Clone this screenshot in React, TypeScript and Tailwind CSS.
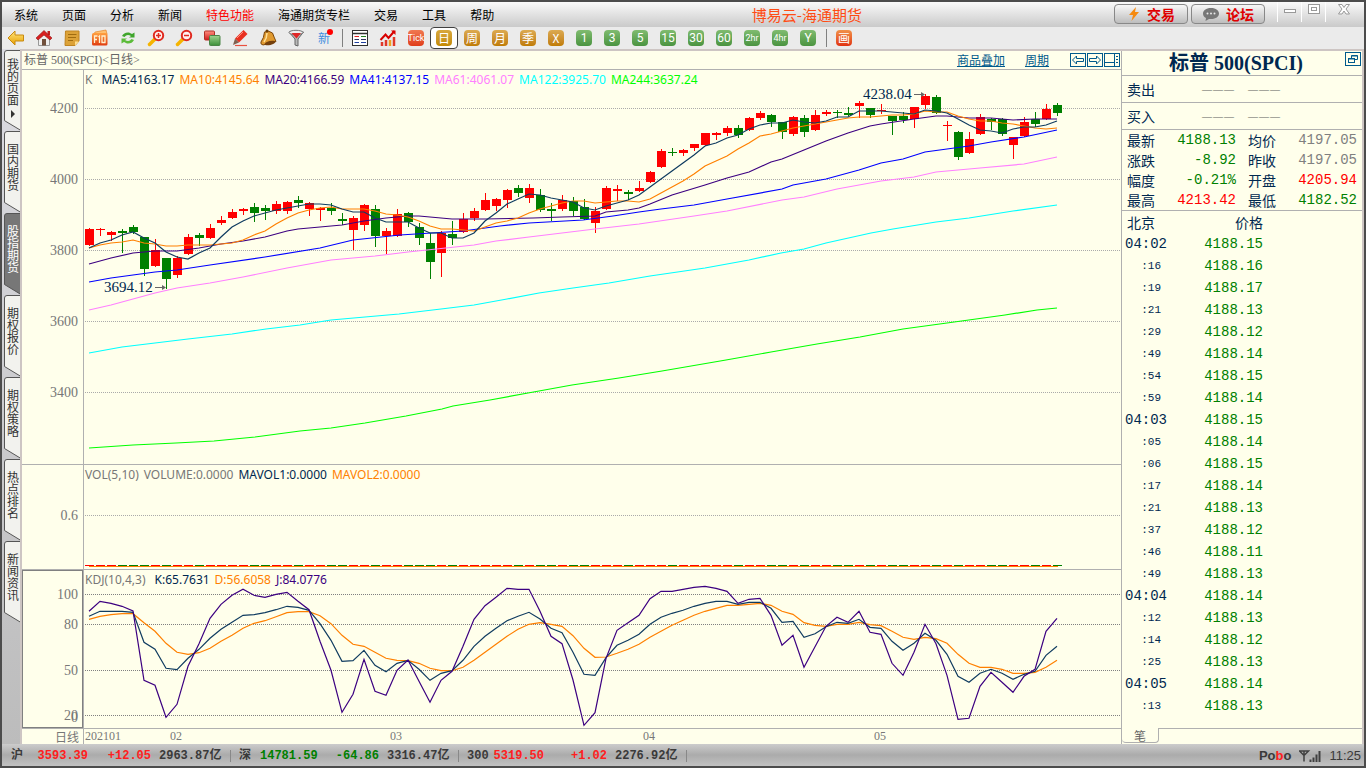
import React from "react";

type Candle = [string, number, number, number, number];

const X0 = 89;
const STEP = 11;

/* direction, high, body top, body bottom, low (chart y positions) */
const candles: Candle[] = [
  ["r", 228, 229, 245, 245], ["r", 228, 229, 230, 235], ["r", 231, 232, 235, 240], ["g", 229, 231, 233, 252],
  ["g", 225, 227, 232, 233], ["g", 237, 237, 269, 275], ["r", 239, 250, 266, 266], ["g", 258, 258, 279, 288],
  ["r", 256, 258, 275, 277], ["r", 234, 237, 254, 254], ["g", 233, 235, 238, 245], ["r", 224, 228, 238, 238],
  ["r", 216, 220, 223, 224], ["r", 209, 212, 218, 218], ["r", 208, 209, 211, 214], ["g", 203, 207, 213, 221],
  ["g", 205, 208, 211, 219], ["r", 201, 204, 211, 213], ["r", 201, 202, 211, 213], ["g", 196, 200, 203, 207],
  ["r", 202, 203, 209, 215], ["r", 207, 208, 210, 220], ["g", 203, 208, 211, 214], ["g", 213, 219, 221, 224],
  ["r", 216, 218, 230, 249], ["r", 204, 205, 225, 230], ["g", 205, 209, 236, 246], ["r", 228, 231, 236, 253],
  ["r", 209, 214, 236, 236], ["g", 212, 213, 222, 226], ["g", 223, 227, 238, 244], ["g", 233, 243, 262, 278],
  ["r", 231, 233, 253, 276], ["g", 221, 234, 238, 244], ["r", 213, 219, 232, 232], ["r", 208, 211, 218, 220],
  ["r", 193, 200, 210, 210], ["r", 198, 199, 206, 210], ["r", 189, 190, 200, 207], ["g", 185, 188, 193, 196],
  ["r", 184, 188, 198, 202], ["g", 189, 195, 210, 211], ["g", 203, 209, 211, 220], ["r", 195, 200, 209, 210],
  ["g", 197, 201, 211, 215], ["g", 199, 207, 219, 219], ["r", 207, 211, 223, 232], ["r", 186, 188, 209, 209],
  ["r", 185, 189, 191, 200], ["g", 190, 192, 194, 199], ["r", 181, 188, 191, 191], ["r", 171, 172, 182, 182],
  ["r", 149, 151, 167, 167], ["g", 148, 152, 153, 155], ["r", 149, 150, 153, 155], ["r", 144, 144, 148, 150],
  ["r", 133, 133, 145, 145], ["r", 132, 133, 135, 139], ["r", 126, 128, 133, 135], ["g", 125, 128, 135, 137],
  ["r", 117, 118, 130, 130], ["r", 111, 113, 118, 119], ["g", 114, 115, 122, 126], ["g", 122, 122, 132, 138],
  ["r", 116, 117, 134, 135], ["g", 115, 118, 132, 136], ["r", 110, 115, 130, 130], ["r", 110, 112, 114, 115],
  ["g", 110, 112, 113, 117], ["g", 107, 113, 115, 115], ["r", 101, 103, 106, 117], ["g", 108, 108, 115, 117],
  ["r", 104, 110, 111, 113], ["g", 116, 116, 121, 134], ["g", 112, 116, 120, 122], ["r", 107, 107, 119, 127],
  ["r", 94, 96, 105, 108], ["g", 95, 97, 113, 113], ["r", 121, 125, 126, 140], ["g", 131, 132, 157, 159],
  ["r", 132, 139, 153, 153], ["r", 114, 117, 134, 134], ["g", 118, 119, 122, 129], ["g", 118, 119, 134, 135],
  ["r", 137, 137, 145, 158], ["r", 117, 122, 136, 136], ["g", 112, 119, 124, 126], ["r", 104, 109, 119, 119],
  ["g", 103, 105, 113, 115],
];

const ma5 = [248, 243, 240, 235, 232, 238, 243, 252, 257, 259, 253, 248, 237, 227, 221, 216, 213, 210, 208, 206, 204, 204, 205, 209, 212, 212, 218, 222, 222, 222, 228, 233, 233, 238, 238, 233, 221, 213, 204, 199, 194, 195, 198, 200, 202, 208, 210, 206, 203, 200, 195, 187, 179, 171, 163, 155, 146, 143, 138, 135, 129, 125, 123, 123, 120, 122, 123, 121, 117, 117, 111, 111, 111, 112, 113, 114, 110, 111, 113, 119, 125, 130, 131, 133, 129, 127, 127, 125, 121];
const ma10 = [248, 245, 243, 242, 240, 243, 244, 246, 246, 245, 245, 245, 244, 243, 240, 235, 231, 224, 218, 213, 210, 208, 207, 209, 209, 209, 211, 214, 215, 217, 221, 226, 229, 229, 230, 231, 227, 223, 221, 218, 213, 209, 206, 203, 201, 201, 203, 202, 201, 201, 202, 199, 193, 187, 181, 174, 166, 161, 156, 149, 143, 136, 134, 131, 128, 126, 124, 122, 120, 118, 117, 117, 116, 115, 115, 114, 111, 112, 112, 116, 119, 121, 121, 123, 124, 126, 128, 129, 128];
const ma20 = "89,264 111,258 133,253 155,251 177,251 199,248 221,244 243,241 265,237 287,231 298,229 320,227 342,225 364,221 386,218 408,216 419,216 452,219 485,219 533,218 562,217 595,216 606,212 628,210 639,208 650,204 672,195 705,185 727,178 749,172 771,162 782,159 804,150 826,141 848,133 870,126 881,124 914,119 936,116 947,116 969,118 991,118 1013,120 1035,119 1057,119";
const ma41 = "89,282 111,278 133,275 155,272 177,270 210,265 265,257 320,248 353,240 400,235 463,231 500,226 529,223 583,220 613,216 639,212 661,209 694,205 727,199 782,189 793,185 826,179 859,170 881,163 903,159 925,152 947,149 969,146 991,142 1024,137 1057,130";
const ma61 = "89,310 111,305 133,299 155,293 177,288 210,283 243,277 287,268 331,260 353,258 375,256 408,252 474,245 496,241 529,237 595,229 639,224 694,216 727,211 782,200 804,197 837,189 881,181 914,177 936,172 980,168 1024,164 1057,157";
const ma122 = "89,353 122,347 155,343 188,339 232,334 266,329 300,325 331,320 399,314 441,309 474,305 507,299 539,293 573,288 609,283 650,276 705,268 749,260 781,253 804,249 826,243 871,233 893,229 936,222 969,218 1013,211 1057,205";
const ma244 = "89,448 133,445 176,443 214,441 255,437 300,431 331,428 365,423 406,416 442,409 453,406 490,400 528,393 572,385 619,378 662,371 726,360 771,352 817,344 860,337 903,329 947,323 1005,315 1037,310 1057,308";

/* KDJ samples, in thirds of a pixel below y = 565 */
const kdjJ = [139, 109, 115, 124, 138, 346, 361, 457, 418, 304, 236, 160, 118, 91, 73, 91, 97, 88, 82, 109, 134, 229, 316, 442, 388, 283, 379, 391, 316, 285, 349, 412, 346, 319, 244, 163, 122, 97, 70, 73, 73, 139, 214, 236, 345, 481, 443, 280, 196, 173, 151, 101, 79, 79, 73, 67, 64, 70, 79, 115, 103, 100, 151, 241, 211, 307, 245, 184, 157, 172, 139, 202, 208, 295, 331, 262, 178, 236, 331, 463, 460, 364, 322, 352, 382, 334, 313, 199, 160];
const kdjK = [154, 139, 139, 139, 142, 232, 253, 310, 314, 280, 253, 220, 193, 172, 151, 149, 143, 134, 124, 127, 136, 176, 226, 289, 287, 256, 301, 320, 295, 286, 313, 346, 325, 317, 286, 244, 214, 190, 167, 154, 142, 162, 190, 203, 262, 328, 331, 278, 241, 226, 208, 178, 157, 145, 136, 124, 115, 109, 109, 118, 112, 112, 130, 172, 169, 217, 206, 185, 172, 175, 163, 187, 190, 229, 256, 235, 205, 226, 268, 334, 352, 325, 313, 325, 343, 328, 319, 271, 244];
const kdjD = [163, 154, 149, 146, 146, 173, 199, 235, 262, 268, 263, 250, 229, 211, 190, 175, 167, 155, 143, 140, 140, 152, 176, 211, 238, 244, 262, 280, 286, 287, 295, 310, 317, 317, 307, 286, 262, 238, 214, 193, 178, 173, 178, 184, 212, 250, 277, 276, 265, 253, 238, 217, 199, 181, 166, 151, 139, 130, 121, 121, 118, 115, 121, 139, 148, 173, 181, 184, 178, 178, 172, 179, 182, 199, 217, 223, 217, 221, 235, 268, 295, 307, 307, 313, 325, 325, 322, 307, 286];

const series = (ys: number[]) => ys.map((y, i) => `${X0 + STEP * i},${y}`).join(" ");
const kdj = (ys: number[]) => ys.map((y, i) => `${X0 + STEP * i},${(565 + y / 3).toFixed(1)}`).join(" ");
const tone = (c: string) => (c === "r" ? "#ff0000" : "#008000");

function Line({ points, color }: { points: string; color: string }) {
  return <polyline points={points} fill="none" stroke={color} strokeWidth="1.2" />;
}

function Grid({ ys, color }: { ys: number[]; color: string }) {
  return (
    <g>
      {ys.map((y) => (
        <line key={y} x1="85" x2="3000" y1={y + 0.5} y2={y + 0.5} stroke={color} strokeDasharray="1 1" shapeRendering="crispEdges" />
      ))}
    </g>
  );
}

function AxisText({ y, children }: { y: number; children: string }) {
  return (
    <text x="78" y={y + 5} textAnchor="end" fill="#777777" className="font-['Liberation_Serif',serif] text-[14px]">
      {children}
    </text>
  );
}

function Divider() {
  return <line x1="83.5" x2="83.5" y1="0" y2="800" stroke="#b0b0b0" shapeRendering="crispEdges" />;
}

function PriceChart() {
  return (
    <svg className="block h-full w-full" role="img" aria-label="K线图">
      <g transform="translate(-22 -70)">
        <Divider />
        <Grid ys={[108, 179, 250, 321, 392]} color="#aaaaaa" />
        <AxisText y={108}>4200</AxisText>
        <AxisText y={179}>4000</AxisText>
        <AxisText y={250}>3800</AxisText>
        <AxisText y={321}>3600</AxisText>
        <AxisText y={392}>3400</AxisText>
        <g shapeRendering="crispEdges">
          {candles.map(([c, h, t, b, l], i) => (
            <g key={i} fill={tone(c)}>
              <rect x={X0 + STEP * i} y={h} width="1" height={l - h + 1} />
              <rect x={X0 + STEP * i - 4} y={t} width="9" height={b - t} />
            </g>
          ))}
        </g>
        <Line points={ma244} color="#00ff00" />
        <Line points={ma122} color="#00ffff" />
        <Line points={ma61} color="#ff80ff" />
        <Line points={ma41} color="#0000ff" />
        <Line points={ma20} color="#3c0080" />
        <Line points={series(ma10)} color="#ff8000" />
        <Line points={series(ma5)} color="#103c60" />
        <g fill="#002850" className="font-['Liberation_Serif',serif] text-[15px]">
          <text x="104" y="292">3694.12</text>
          <text x="863" y="99">4238.04</text>
        </g>
        <g stroke="#666666" fill="#666666">
          <path d="M155 287.500H165" />
          <path d="M162 285L166 287.500L162 290Z" stroke="none" />
          <path d="M914 94.500H924" />
          <path d="M921 92L925 94.500L921 97Z" stroke="none" />
        </g>
      </g>
    </svg>
  );
}

function VolumeChart() {
  return (
    <svg className="block h-full w-full" role="img" aria-label="成交量">
      <g transform="translate(-22 -465)">
        <Divider />
        <Grid ys={[515]} color="#aaaaaa" />
        <AxisText y={515}>0.6</AxisText>
        <g shapeRendering="crispEdges">
          {candles.map(([c], i) => (
            <rect key={i} x={X0 + STEP * i - 4} y="565" width="9" height="1" fill={tone(c)} />
          ))}
          <rect x="89" y="566" width="969" height="1" fill="#ff8000" />
        </g>
      </g>
    </svg>
  );
}

function KdjChart() {
  return (
    <svg className="block h-full w-full" role="img" aria-label="KDJ">
      <g transform="translate(-22 -570)">
        <Divider />
        <rect x="22.500" y="570.500" width="60" height="157" fill="none" stroke="#808080" shapeRendering="crispEdges" />
        <Grid ys={[594, 624, 670, 715]} color="#808080" />
        <AxisText y={594}>100</AxisText>
        <AxisText y={624}>80</AxisText>
        <AxisText y={670}>50</AxisText>
        <AxisText y={715}>20</AxisText>
        <AxisText y={717}>0</AxisText>
        <Line points={kdj(kdjD)} color="#ff8000" />
        <Line points={kdj(kdjK)} color="#103c60" />
        <Line points={kdj(kdjJ)} color="#3c0080" />
      </g>
    </svg>
  );
}

const menus = ["系统", "页面", "分析", "新闻", "特色功能", "海通期货专栏", "交易", "工具", "帮助"];

const icon = "block size-[18px]";

function Defs() {
  return (
    <svg className="absolute size-0" aria-hidden="true">
      <defs>
        <linearGradient id="gold" x1="0" y1="0" x2="0" y2="1"><stop offset="0" stopColor="#ffe680" /><stop offset="1" stopColor="#e8a000" /></linearGradient>
        <linearGradient id="orange" x1="0" y1="0" x2="0" y2="1"><stop offset="0" stopColor="#ffa040" /><stop offset="1" stopColor="#e03c10" /></linearGradient>
        <linearGradient id="greenery" x1="0" y1="0" x2="0" y2="1"><stop offset="0" stopColor="#9fd48f" /><stop offset="1" stopColor="#3d8f3a" /></linearGradient>
        <linearGradient id="redness" x1="0" y1="0" x2="0" y2="1"><stop offset="0" stopColor="#ff9080" /><stop offset="1" stopColor="#d01818" /></linearGradient>
      </defs>
    </svg>
  );
}

function Magnifier({ plus }: { plus: boolean }) {
  return (
    <svg viewBox="0 0 18 18" className={icon}>
      <path d="M8 10L2.500 15.500" stroke="#f5b400" strokeWidth="3.500" strokeLinecap="round" />
      <circle cx="11.500" cy="6.500" r="4.700" fill="#fff2f0" stroke="#e02a20" strokeWidth="2" />
      <path d="M9 6.500H14" stroke="#e02a20" strokeWidth="1.500" />
      {plus && <path d="M11.500 4V9" stroke="#e02a20" strokeWidth="1.500" />}
    </svg>
  );
}

const tools: { label: string; art: React.ReactNode }[] = [
  { label: "后退", art: <svg viewBox="0 0 18 18" className={icon}><path d="M1 9L8 2V6H16.500V12H8V16Z" fill="url(#gold)" stroke="#c88a10" /></svg> },
  { label: "主页", art: <svg viewBox="0 0 18 18" className={icon}><path d="M3.500 9V16.500H14.500V9L9 4Z" fill="#eeeeee" stroke="#999999" /><rect x="7" y="10" width="4" height="6.500" fill="#70503c" /><path d="M12.500 2H15V6H12.500Z" fill="#c02020" /><path d="M1 9L9 1.500L17 9L15 11L9 6L3 11Z" fill="#d82020" stroke="#901818" strokeWidth=".6" /></svg> },
  { label: "笔记", art: <svg viewBox="0 0 18 18" className={icon}><path d="M2.500 2H16V12L12 16.500H2Z" fill="#dca238" stroke="#c08420" /><path d="M5 5.500H13.500M5 8.500H13M5 11.500H10" stroke="#a06c10" /><path d="M12 16.500V12.500H16Z" fill="#ffe090" /></svg> },
  { label: "F10", art: <svg viewBox="0 0 18 18" className={icon}><path d="M4 3L15 1L16 5H3Z" fill="#ffc070" stroke="#e07818" strokeWidth=".6" /><rect x="1" y="4" width="15.500" height="12.500" rx="1.500" fill="url(#orange)" /><path d="M3.500 14V7H6.500M3.500 10.500H6M8.500 14V7L7.500 8M11 7H14V13.500H11Z" fill="none" stroke="#fff0d0" strokeWidth="1.300" /></svg> },
  { label: "刷新", art: <svg viewBox="0 0 18 18" className={icon}><path d="M3 7Q5 3 10 3.500L13 5L15.500 3.500V8.500H10L12 7Q8 4.500 5.500 8Z" fill="#3fa52c" /><path d="M15 11Q13 15 8 14.500L5 13L2.500 14.500V9.500H8L6 11Q10 13.500 12.500 10Z" fill="#5cbc3a" /></svg> },
  { label: "放大", art: <Magnifier plus /> },
  { label: "缩小", art: <Magnifier plus={false} /> },
  { label: "叠加", art: <svg viewBox="0 0 18 18" className={icon}><rect x="1.500" y="2" width="10" height="9" rx="1" fill="url(#redness)" stroke="#b03028" /><rect x="6.500" y="6.500" width="10.500" height="10" rx="1" fill="url(#greenery)" stroke="#4b8547" /></svg> },
  { label: "画线", art: <svg viewBox="0 0 18 18" className={icon}><path d="M12.500 1L16.500 5L8 13.500L4 9.500Z" fill="#e83020" /><path d="M12 3L6 9" stroke="#ff9080" /><path d="M4 9.500L8 13.500L2 16Z" fill="#806050" /><path d="M4 16.500H16" stroke="#e85040" strokeWidth="1.200" /></svg> },
  { label: "预警", art: <svg viewBox="0 0 18 18" className={icon}><path d="M5.500 3Q10 1 13.500 4Q15 8 17 12.500L4 16Q1 15 2 13Q5 9 5.500 3Z" fill="#e09a30" stroke="#7c4608" /><path d="M8 4Q8 9 5 13" stroke="#ffe098" strokeWidth="1.500" fill="none" /><ellipse cx="11" cy="14" rx="5.500" ry="2" fill="#75400c" transform="rotate(-14 11 14)" /><circle cx="8" cy="2" r="1.500" fill="#6b3d08" /></svg> },
  { label: "筛选", art: <svg viewBox="0 0 18 18" className={icon}><path d="M2 3L8 10V16L11 17V10L16.500 3Z" fill="#b8b8b8" stroke="#666666" /><ellipse cx="9" cy="3.500" rx="7" ry="2.200" fill="#eeeeee" stroke="#777777" /><path d="M4.500 4H14L9.500 9.500Z" fill="#e02828" /></svg> },
  { label: "新", art: <span className="relative block size-[18px] text-[12px] leading-[18px] text-[#3f8ee0]">新<i className="absolute right-0 top-0 size-1.5 rounded-full bg-[#ff0000]" /></span> },
];

function ReportIcon() {
  return (
    <svg viewBox="0 0 18 18" className={icon}>
      <rect x="1.500" y="1.500" width="15" height="15" fill="#ffffff" stroke="#303030" />
      <path d="M1 4.500H17" stroke="#303030" strokeWidth="1.500" />
      <path d="M3.500 7.500H8" stroke="#e02020" /><path d="M10 7.500H15" stroke="#208020" />
      <path d="M3.500 10.500H8M10 10.500H15" stroke="#303060" /><path d="M3.500 13.500H8M10 13.500H15" stroke="#2040a0" />
    </svg>
  );
}

function TrendIcon() {
  return (
    <svg viewBox="0 0 18 18" className={icon}>
      <path d="M3 13V17M7 11V17" stroke="#e03828" strokeWidth="2.500" /><path d="M11 11V17" stroke="#f0a020" strokeWidth="2.500" /><path d="M15 8V17" stroke="#e03828" strokeWidth="2.500" />
      <path d="M1.500 11L6.500 5.500L9.500 9L15.500 2" fill="none" stroke="#d80000" strokeWidth="2" /><path d="M12 1.500H16.500V6Z" fill="#d80000" />
    </svg>
  );
}

const goldKeys = ["周", "月", "季", "X"];
const greenKeys = ["1", "3", "5", "15", "30", "60", "2hr", "4hr", "Y"];
const key = "block size-4 rounded-sm text-center leading-4 text-white";
const cell = "flex h-[22px] w-7 shrink-0 items-center justify-center";

function Toolbar() {
  return (
    <div className="flex h-[22px] items-center bg-[#ebebeb]">
      {tools.map((t) => (
        <button key={t.label} aria-label={t.label} className={cell}>{t.art}</button>
      ))}
      <div className="flex w-2 shrink-0 justify-center"><i className="h-[18px] w-px bg-[#808080]" /></div>
      <button aria-label="报价" className={cell}><ReportIcon /></button>
      <button aria-label="走势" className={cell}><TrendIcon /></button>
      <button className={cell}><span className="flex size-4 justify-center rounded-sm bg-linear-to-b from-[#f07850] to-[#e03c18] font-['Liberation_Sans_Narrow',Roboto,sans-serif] text-[9px] leading-4 text-white">Tick</span></button>
      <button aria-pressed="true" className="flex h-[22px] w-7 shrink-0 items-center justify-center rounded-sm border border-[#404040] bg-white">
        <span className={key + " bg-linear-to-b from-[#d8a83c] to-[#c48a00] text-[12px]"}>日</span>
      </button>
      {goldKeys.map((k) => (
        <button key={k} className={cell}><span className={key + " bg-linear-to-b from-[#dcaa50] to-[#c07c00] text-[12px]"}>{k}</span></button>
      ))}
      {greenKeys.map((k) => (
        <button key={k} className={cell}>
          <span className={key + " bg-linear-to-b from-[#80bc70] to-[#4a9440] font-[Roboto,sans-serif] " + (k.length > 2 ? "text-[9px]" : "text-[12px]")}>{k}</span>
        </button>
      ))}
      <div className="flex w-2 shrink-0 justify-center"><i className="h-[18px] w-px bg-[#808080]" /></div>
      <button className={cell}><span className={key + " bg-linear-to-b from-[#f09048] to-[#e03010] text-[12px]"}>画</span></button>
    </div>
  );
}

const capsule = "flex h-5 w-[74px] items-center justify-center gap-1.5 rounded-[4px] border border-[#888888] bg-linear-to-b from-[#f8f8f8] to-[#bdbdbd] text-[14px] leading-none font-bold text-[#e00000]";

function TitleBar() {
  return (
    <header className="relative flex h-[25px] items-start bg-linear-to-b from-[#fafafa] to-[#cacaca] pr-[3px]">
      <nav className="flex gap-6 pl-3 text-[12px] leading-[26px] text-black">
        {menus.map((m) => (
          <button key={m} className={m === "特色功能" ? "text-[#ff0000]" : "text-black"}>{m}</button>
        ))}
      </nav>
      <h1 className="ml-auto text-[15px] leading-[26px] text-[#ff4c14]">博易云-海通期货</h1>
      <div className="ml-[252px] flex shrink-0 gap-[3px] pt-0.5">
        <button className={capsule}>
          <svg viewBox="0 0 14 16" className="h-4 w-3.5"><path d="M9 1L2 9H6L4.500 15L12 6H8Z" fill="#f58a10" /></svg>
          交易
        </button>
        <button className={capsule}>
          <svg viewBox="0 0 18 14" className="h-3.5 w-[18px]"><path d="M9 1C14 1 17 3.500 17 6.500S14 12 9 12L7 12L3.500 14L4 11C2 10 1 8.500 1 6.500C1 3.500 4 1 9 1Z" fill="#777777" /><g fill="#e8e8e8"><circle cx="5.500" cy="6.500" r="1" /><circle cx="9" cy="6.500" r="1" /><circle cx="12.500" cy="6.500" r="1" /></g></svg>
          论坛
        </button>
      </div>
      <div className="ml-3 flex h-5 shrink-0 text-[#999999]">
        <button aria-label="最小化" className="flex w-6 items-start justify-center border-l border-white pt-0.5"><svg viewBox="0 0 14 12" className="h-3 w-3.5"><rect x="1.500" y="5.500" width="11" height="3" fill="#ffffff" stroke="#999999" /></svg></button>
        <button aria-label="最大化" className="flex w-6 items-start justify-center border-l border-white pt-0.5"><svg viewBox="0 0 14 12" className="h-3 w-3.5"><rect x="1.500" y=".5" width="11" height="9" fill="#ffffff" stroke="#999999" /><rect x="4.500" y="3.500" width="5" height="3" fill="none" stroke="#999999" /></svg></button>
        <button aria-label="关闭" className="flex w-9 items-start justify-center border-l border-white pt-0.5"><svg viewBox="0 0 14 12" className="h-3 w-3.5"><path d="M1.500 .5H5L7 3.500L9 .5H12.500L9 5L12.500 10H9L7 7L5 10H1.500L5 5Z" fill="#ffffff" stroke="#999999" /></svg></button>
      </div>
    </header>
  );
}

const tabs = ["我的页面", "国内期货", "股指期货", "期权报价", "期权策略", "热点排名", "新闻资讯"];

function SideTabs() {
  return (
    <nav className="flex w-[18px] shrink-0 flex-col bg-linear-to-b from-[#dcdce2] to-[#bcbcbc] pl-0.5 pt-px">
      {tabs.map((t, i) => {
        const on = i === 2;
        return (
          <button key={t} aria-current={on ? "page" : undefined} className={"relative flex w-4 flex-col items-center pl-px text-[12px] leading-[14px] " + (i === 0 ? "h-[81px] pt-2 " : "h-[82px] pt-3 ") + (on ? "text-white" : "text-[#333333]")}>
            <svg viewBox="0 0 16 82" preserveAspectRatio="none" className="absolute inset-0 h-full w-full">
              <path d="M17 .5H3Q.5 .5 .5 3V71.500L17 81.500Z" fill={on ? "#777777" : "#f2f2ee"} stroke="#555555" />
            </svg>
            <span className="relative [writing-mode:vertical-rl]">{t}</span>
            {i === 0 && <svg viewBox="0 0 6 8" className="relative mt-1 h-2 w-1.5"><path d="M1 0L5 4L1 8Z" fill="#333333" /></svg>}
          </button>
        );
      })}
    </nav>
  );
}

const label = "absolute left-[63px] top-0 flex gap-[5px] whitespace-pre font-['Noto_Sans',sans-serif] text-[12px] leading-5";

function ChartArea() {
  return (
    <main className="flex min-w-0 flex-1 flex-col">
      <div className="flex h-[19px] items-center border-b border-[#b0b0b0] pl-0.5">
        <h2 className="font-['Liberation_Serif','Noto_Sans_CJK_SC',serif] text-[12px] leading-[18px] text-[#666666]">标普 500(SPCI)&lt;日线&gt;</h2>
        <a href="#overlay" className="ml-auto text-[12px] leading-[18px] text-[#005a8c] underline">商品叠加</a>
        <a href="#period" className="ml-5 mr-[21px] text-[12px] leading-[18px] text-[#005a8c] underline">周期</a>
        <div className="flex gap-px pr-px">
          <button aria-label="向左"><svg viewBox="0 0 16 14" className="h-3.5 w-4" fill="none" stroke="#005a8c"><rect x=".5" y=".5" width="15" height="13" /><path d="M2.500 7L6.500 3V5.500H13.500V8.500H6.500V11Z" /></svg></button>
          <button aria-label="向右"><svg viewBox="0 0 16 14" className="h-3.5 w-4" fill="none" stroke="#005a8c"><rect x=".5" y=".5" width="15" height="13" /><path d="M13.500 7L9.500 3V5.500H2.500V8.500H9.500V11Z" /></svg></button>
          <button aria-label="布局"><svg viewBox="0 0 16 14" className="h-3.5 w-4" fill="none" stroke="#005a8c"><rect x=".5" y=".5" width="15" height="13" /><path d="M10.500 0V14M0 9.500H10" /><path d="M12 3.500H14M12 6.500H14M12 9.500H14" /></svg></button>
        </div>
      </div>
      <section className="relative min-h-[395px] flex-1 border-b border-[#b0b0b0]">
        <PriceChart />
        <p className={label}>
          <span className="mr-1 text-[#777777]">K</span>
          <span className="text-[#002850]">MA5:4163.17</span>
          <span className="text-[#ff8000]">MA10:4145.64</span>
          <span className="text-[#3c0080]">MA20:4166.59</span>
          <span className="text-[#0000ff]">MA41:4137.15</span>
          <span className="text-[#ff80ff]">MA61:4061.07</span>
          <span className="text-[#00ffff]">MA122:3925.70</span>
          <span className="text-[#00ff00]">MA244:3637.24</span>
        </p>
      </section>
      <section className="relative h-[105px] border-b border-[#b0b0b0]">
        <VolumeChart />
        <p className={label}>
          <span className="text-[#777777]">VOL(5,10)</span>
          <span className="text-[#777777]">VOLUME:0.0000</span>
          <span className="text-[#002850]">MAVOL1:0.0000</span>
          <span className="text-[#ff8000]">MAVOL2:0.0000</span>
        </p>
      </section>
      <section className="relative h-[159px] border-b border-[#b0b0b0]">
        <KdjChart />
        <p className={label}>
          <span className="mr-1 text-[#777777]">KDJ(10,4,3)</span>
          <span className="text-[#002850]">K:65.7631</span>
          <span className="text-[#ff8000]">D:56.6058</span>
          <span className="text-[#3c0080]">J:84.0776</span>
        </p>
      </section>
      <div className="flex h-[15px] text-[12px] leading-[15px] text-[#777777]">
        <span className="w-[61px] pr-1 text-right">日线</span>
        <svg className="h-[15px] flex-1">
          <line x1=".5" x2=".5" y1="0" y2="15" stroke="#b0b0b0" />
          <g fill="#777777" className="font-['Liberation_Serif',serif] text-[12px]">
            <text x="2" y="11">202101</text>
            <text x="87" y="11">02</text>
            <text x="307" y="11">03</text>
            <text x="560" y="11">04</text>
            <text x="791" y="11">05</text>
          </g>
        </svg>
      </div>
    </main>
  );
}

const quotes = [
  ["最新", "4188.13", "text-[#008000]", "均价", "4197.05", "text-[#808080]"],
  ["涨跌", "-8.92", "text-[#008000]", "昨收", "4197.05", "text-[#808080]"],
  ["幅度", "-0.21%", "text-[#008000]", "开盘", "4205.94", "text-[#ff0000]"],
  ["最高", "4213.42", "text-[#ff0000]", "最低", "4182.52", "text-[#008000]"],
];

const ticks = [
  ["04:02", "4188.15"], [":16", "4188.16"], [":19", "4188.17"], [":21", "4188.13"], [":29", "4188.12"], [":49", "4188.14"],
  [":54", "4188.15"], [":59", "4188.14"], ["04:03", "4188.15"], [":05", "4188.14"], [":06", "4188.15"], [":17", "4188.14"],
  [":21", "4188.13"], [":37", "4188.12"], [":46", "4188.11"], [":49", "4188.13"], ["04:04", "4188.14"], [":12", "4188.13"],
  [":14", "4188.12"], [":25", "4188.13"], ["04:05", "4188.14"], [":13", "4188.13"],
];

function Dashes() {
  return (
    <span className="flex gap-px font-['Liberation_Serif',serif] text-[10px] text-[#606060]">
      <span>—</span><span>—</span><span>—</span>
    </span>
  );
}

function QuotePanel() {
  return (
    <aside className="flex w-[241px] shrink-0 flex-col border-l border-[#b0b0b0]">
      <div className="relative flex h-[25px] items-center justify-center border-b border-[#b0b0b0] pr-3">
        <h2 className="font-['Liberation_Serif','Noto_Sans_CJK_SC',serif] text-[20px] leading-6 font-bold text-[#002850]">标普 500(SPCI)</h2>
        <button aria-label="还原窗口" className="absolute right-px top-px">
          <svg viewBox="0 0 16 14" className="h-3.5 w-4" fill="none" stroke="#005a8c"><rect x=".5" y=".5" width="15" height="13" /><path d="M6.500 6V3.500H12.500V7.500H10M6.500 4H12.500" /><rect x="3.500" y="6.500" width="6" height="4" /><path d="M3.500 7H9.500" /></svg>
        </button>
      </div>
      {["卖出", "买入"].map((t) => (
        <div key={t} className="flex h-[27px] items-center border-b border-[#b0b0b0] pl-[5px] text-[14px] text-[#002850]">
          <span className="w-[75px]">{t}</span>
          <span className="flex gap-3.5"><Dashes /><Dashes /></span>
        </div>
      ))}
      <table className="w-full border-b border-[#b0b0b0] text-[14px] leading-5 text-[#002850]">
        <tbody>
          {quotes.map(([a, av, ac, b, bv, bc]) => (
            <tr key={a} className="h-5">
              <th className="w-[34px] p-0 pl-[5px] text-left font-normal">{a}</th>
              <td className={"w-20 p-0 text-right font-['Liberation_Mono',monospace] text-[14px] " + ac}>{av}</td>
              <th className="w-[42px] p-0 pl-3 text-left font-normal">{b}</th>
              <td className={"p-0 pr-[5px] text-right font-['Liberation_Mono',monospace] text-[14px] " + bc}>{bv}</td>
            </tr>
          ))}
        </tbody>
      </table>
      <table className="w-full text-[#002850]">
        <thead>
          <tr className="h-[22px] text-[14px] leading-[22px]">
            <th className="w-[45px] p-0 pl-[5px] text-left font-normal">北京</th>
            <th className="w-24 p-0 text-right font-normal">价格</th>
            <th className="p-0" />
          </tr>
        </thead>
        <tbody className="font-['Liberation_Mono',monospace]">
          {ticks.map(([t, p], i) => (
            <tr key={i} className="h-[22px] leading-[22px]">
              <td className={t.length > 3 ? "p-0 text-right text-[14px]" : "p-0 pr-1.5 text-right text-[11px]"}>{t}</td>
              <td className="p-0 text-right text-[14px] text-[#008000]">{p}</td>
              <td className="p-0" />
            </tr>
          ))}
        </tbody>
      </table>
      <div className="mt-auto flex h-4">
        <button className="h-[15px] w-[37px] rounded-b-sm border-r border-b border-[#b0b0b0] text-[12px] leading-[15px] text-[#666666]">笔</button>
        <i className="flex-1 border-t border-[#b0b0b0]" />
      </div>
    </aside>
  );
}

function Index({ name, value, change, turnover, up }: { name: string; value: string; change: string; turnover: string; up: boolean }) {
  const color = up ? "text-[#ff2020]" : "text-[#008000]";
  return (
    <div className="flex items-center">
      <span className="w-[21px]">{name}</span>
      <span className={"w-14 text-right " + color}>{value}</span>
      <span className={"w-[63px] text-right " + color}>{change}</span>
      <span className="ml-2 w-[63px]">{turnover}</span>
      <i className="ml-2 h-3 w-px bg-[#888888]" />
    </div>
  );
}

function StatusBar() {
  return (
    <footer className="flex h-[22px] items-center gap-2 bg-linear-to-b from-[#cccccc] via-[#ababab] to-[#c2c2c2] pt-0.5 pl-[9px] pr-[3px] font-['Liberation_Mono','Noto_Sans_CJK_SC',monospace] text-[12px] font-bold text-[#3a3a3a]">
      <Index name="沪" value="3593.39" change="+12.05" turnover="2963.87亿" up />
      <Index name="深" value="14781.59" change="-64.86" turnover="3316.47亿" up={false} />
      <Index name="300" value="5319.50" change="+1.02" turnover="2276.92亿" up />
      <span className="ml-auto font-['Liberation_Sans',sans-serif] text-[13px]">Po<span className="text-[#ff2020]">b</span>o</span>
      <svg viewBox="0 0 22 12" className="h-3 w-[22px]" fill="none" stroke="#404040"><path d="M.5 1H9.500L5 5.500ZM5 1V11.500" strokeWidth="1.500" /><path d="M11.500 9.500V12M14.500 7.500V12M17.500 4.500V12M20.500 1V12" strokeWidth="2" /></svg>
      <time className="font-['Liberation_Sans',sans-serif] text-[13px] font-normal">11:25</time>
    </footer>
  );
}

export default function App() {
  return (
    <div className="flex min-h-screen w-full flex-col border-2 border-[#4c4c4c] bg-[#ebebeb] font-['Noto_Sans_CJK_SC',sans-serif]">
      <Defs />
      <TitleBar />
      <Toolbar />
      <div className="flex flex-1">
        <SideTabs />
        <div className="flex min-w-0 flex-1 border-x-2 border-t-2 border-[#cdc5c3] bg-[#ffffeb]">
          <ChartArea />
          <QuotePanel />
        </div>
      </div>
      <StatusBar />
    </div>
  );
}
